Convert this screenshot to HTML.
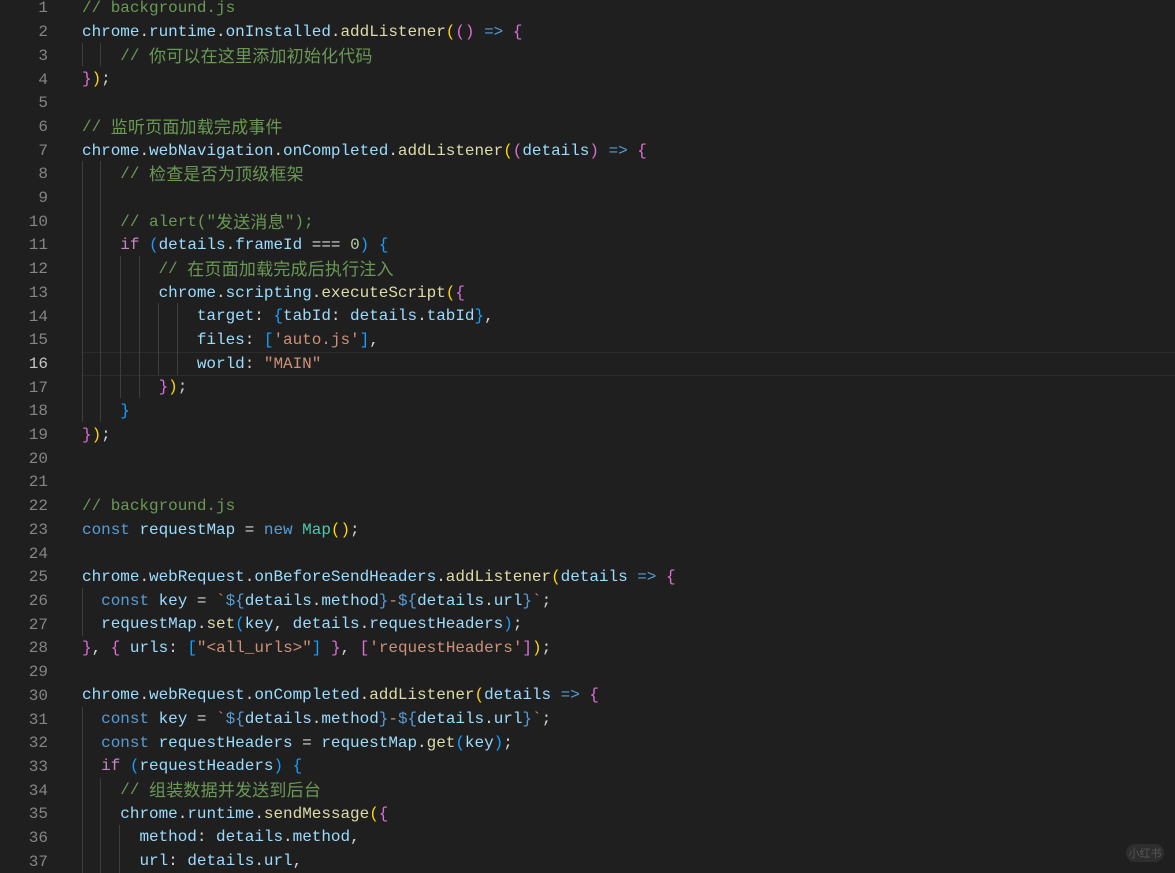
<!DOCTYPE html>
<html><head><meta charset="utf-8"><style>
html,body{margin:0;padding:0;background:#1f1f1f;width:1175px;height:873px;overflow:hidden;position:relative}
.ln{position:absolute;left:0;width:48px;text-align:right;color:#858585;font:16px "Liberation Mono",monospace;line-height:23.7px;white-space:pre}
.code{position:absolute;left:82px;top:-2.6px;margin:0;font:16px "Liberation Mono",monospace;line-height:23.7px;color:#d4d4d4;white-space:pre;letter-spacing:-0.03px}
.code>div{height:23.7px;overflow:visible}
.lnbox{top:-2.6px}
.cur{position:absolute;left:82px;right:0;top:352px;height:22px;border-top:1px solid #2c2c2c;border-bottom:1px solid #2c2c2c}
.g{position:absolute;width:1px;background:#3e3e3e}
.v{color:#9cdcfe}.f{color:#dcdcaa}.c{color:#6a9955}.k{color:#569cd6}.p{color:#c586c0}.s{color:#ce9178}.n{color:#b5cea8}.t{color:#4ec9b0}.y{color:#ffd700}.m{color:#da70d6}.b{color:#179fff}
.z{font-family:"Noto Sans CJK SC",sans-serif;font-size:17px;letter-spacing:0.2px;line-height:10px;position:relative;top:2px}
.wm{position:absolute;left:1126px;top:844px;width:38px;height:18px;border-radius:9px;background:#2e2e2e;color:#555;font:11px "Noto Sans CJK SC",sans-serif;text-align:center;line-height:18px}
</style></head><body>
<div class="cur"></div>
<div class="ln lnbox">1
2
3
4
5
6
7
8
9
10
11
12
13
14
15
<span style="color:#c6c6c6">16</span>
17
18
19
20
21
22
23
24
25
26
27
28
29
30
31
32
33
34
35
36
37</div>
<div class="g" style="left:82px;top:43px;height:23px"></div>
<div class="g" style="left:100px;top:43px;height:23px"></div>
<div class="g" style="left:82px;top:161px;height:261px"></div>
<div class="g" style="left:100px;top:161px;height:261px"></div>
<div class="g" style="left:120px;top:256px;height:142px"></div>
<div class="g" style="left:139px;top:256px;height:142px"></div>
<div class="g" style="left:158px;top:303px;height:72px"></div>
<div class="g" style="left:177px;top:303px;height:72px"></div>
<div class="g" style="left:82px;top:588px;height:48px"></div>
<div class="g" style="left:82px;top:707px;height:166px"></div>
<div class="g" style="left:100px;top:778px;height:95px"></div>
<div class="g" style="left:119px;top:825px;height:48px"></div>
<div class="code"><div><span class="c">// background.js</span></div><div><span class="v">chrome</span>.<span class="v">runtime</span>.<span class="v">onInstalled</span>.<span class="f">addListener</span><span class="y">(</span><span class="m">()</span> <span class="k">=&gt;</span> <span class="m">{</span></div><div>    <span class="c">// <span class="z">你可以在这里添加初始化代码</span></span></div><div><span class="m">}</span><span class="y">)</span>;</div><div> </div><div><span class="c">// <span class="z">监听页面加载完成事件</span></span></div><div><span class="v">chrome</span>.<span class="v">webNavigation</span>.<span class="v">onCompleted</span>.<span class="f">addListener</span><span class="y">(</span><span class="m">(</span><span class="v">details</span><span class="m">)</span> <span class="k">=&gt;</span> <span class="m">{</span></div><div>    <span class="c">// <span class="z">检查是否为顶级框架</span></span></div><div> </div><div>    <span class="c">// alert("<span class="z">发送消息</span>");</span></div><div>    <span class="p">if</span> <span class="b">(</span><span class="v">details</span>.<span class="v">frameId</span> === <span class="n">0</span><span class="b">)</span> <span class="b">{</span></div><div>        <span class="c">// <span class="z">在页面加载完成后执行注入</span></span></div><div>        <span class="v">chrome</span>.<span class="v">scripting</span>.<span class="f">executeScript</span><span class="y">(</span><span class="m">{</span></div><div>            <span class="v">target</span>: <span class="b">{</span><span class="v">tabId</span>: <span class="v">details</span>.<span class="v">tabId</span><span class="b">}</span>,</div><div>            <span class="v">files</span>: <span class="b">[</span><span class="s">'auto.js'</span><span class="b">]</span>,</div><div>            <span class="v">world</span>: <span class="s">"MAIN"</span></div><div>        <span class="m">}</span><span class="y">)</span>;</div><div>    <span class="b">}</span></div><div><span class="m">}</span><span class="y">)</span>;</div><div> </div><div> </div><div><span class="c">// background.js</span></div><div><span class="k">const</span> <span class="v">requestMap</span> = <span class="k">new</span> <span class="t">Map</span><span class="y">()</span>;</div><div> </div><div><span class="v">chrome</span>.<span class="v">webRequest</span>.<span class="v">onBeforeSendHeaders</span>.<span class="f">addListener</span><span class="y">(</span><span class="v">details</span> <span class="k">=&gt;</span> <span class="m">{</span></div><div>  <span class="k">const</span> <span class="v">key</span> = <span class="s">`</span><span class="k">${</span><span class="v">details</span>.<span class="v">method</span><span class="k">}</span><span class="s">-</span><span class="k">${</span><span class="v">details</span>.<span class="v">url</span><span class="k">}</span><span class="s">`</span>;</div><div>  <span class="v">requestMap</span>.<span class="f">set</span><span class="b">(</span><span class="v">key</span>, <span class="v">details</span>.<span class="v">requestHeaders</span><span class="b">)</span>;</div><div><span class="m">}</span>, <span class="m">{</span> <span class="v">urls</span>: <span class="b">[</span><span class="s">"&lt;all_urls&gt;"</span><span class="b">]</span> <span class="m">}</span>, <span class="m">[</span><span class="s">'requestHeaders'</span><span class="m">]</span><span class="y">)</span>;</div><div> </div><div><span class="v">chrome</span>.<span class="v">webRequest</span>.<span class="v">onCompleted</span>.<span class="f">addListener</span><span class="y">(</span><span class="v">details</span> <span class="k">=&gt;</span> <span class="m">{</span></div><div>  <span class="k">const</span> <span class="v">key</span> = <span class="s">`</span><span class="k">${</span><span class="v">details</span>.<span class="v">method</span><span class="k">}</span><span class="s">-</span><span class="k">${</span><span class="v">details</span>.<span class="v">url</span><span class="k">}</span><span class="s">`</span>;</div><div>  <span class="k">const</span> <span class="v">requestHeaders</span> = <span class="v">requestMap</span>.<span class="f">get</span><span class="b">(</span><span class="v">key</span><span class="b">)</span>;</div><div>  <span class="p">if</span> <span class="b">(</span><span class="v">requestHeaders</span><span class="b">)</span> <span class="b">{</span></div><div>    <span class="c">// <span class="z">组装数据并发送到后台</span></span></div><div>    <span class="v">chrome</span>.<span class="v">runtime</span>.<span class="f">sendMessage</span><span class="y">(</span><span class="m">{</span></div><div>      <span class="v">method</span>: <span class="v">details</span>.<span class="v">method</span>,</div><div>      <span class="v">url</span>: <span class="v">details</span>.<span class="v">url</span>,</div></div>
<div class="wm">小红书</div>
</body></html>
